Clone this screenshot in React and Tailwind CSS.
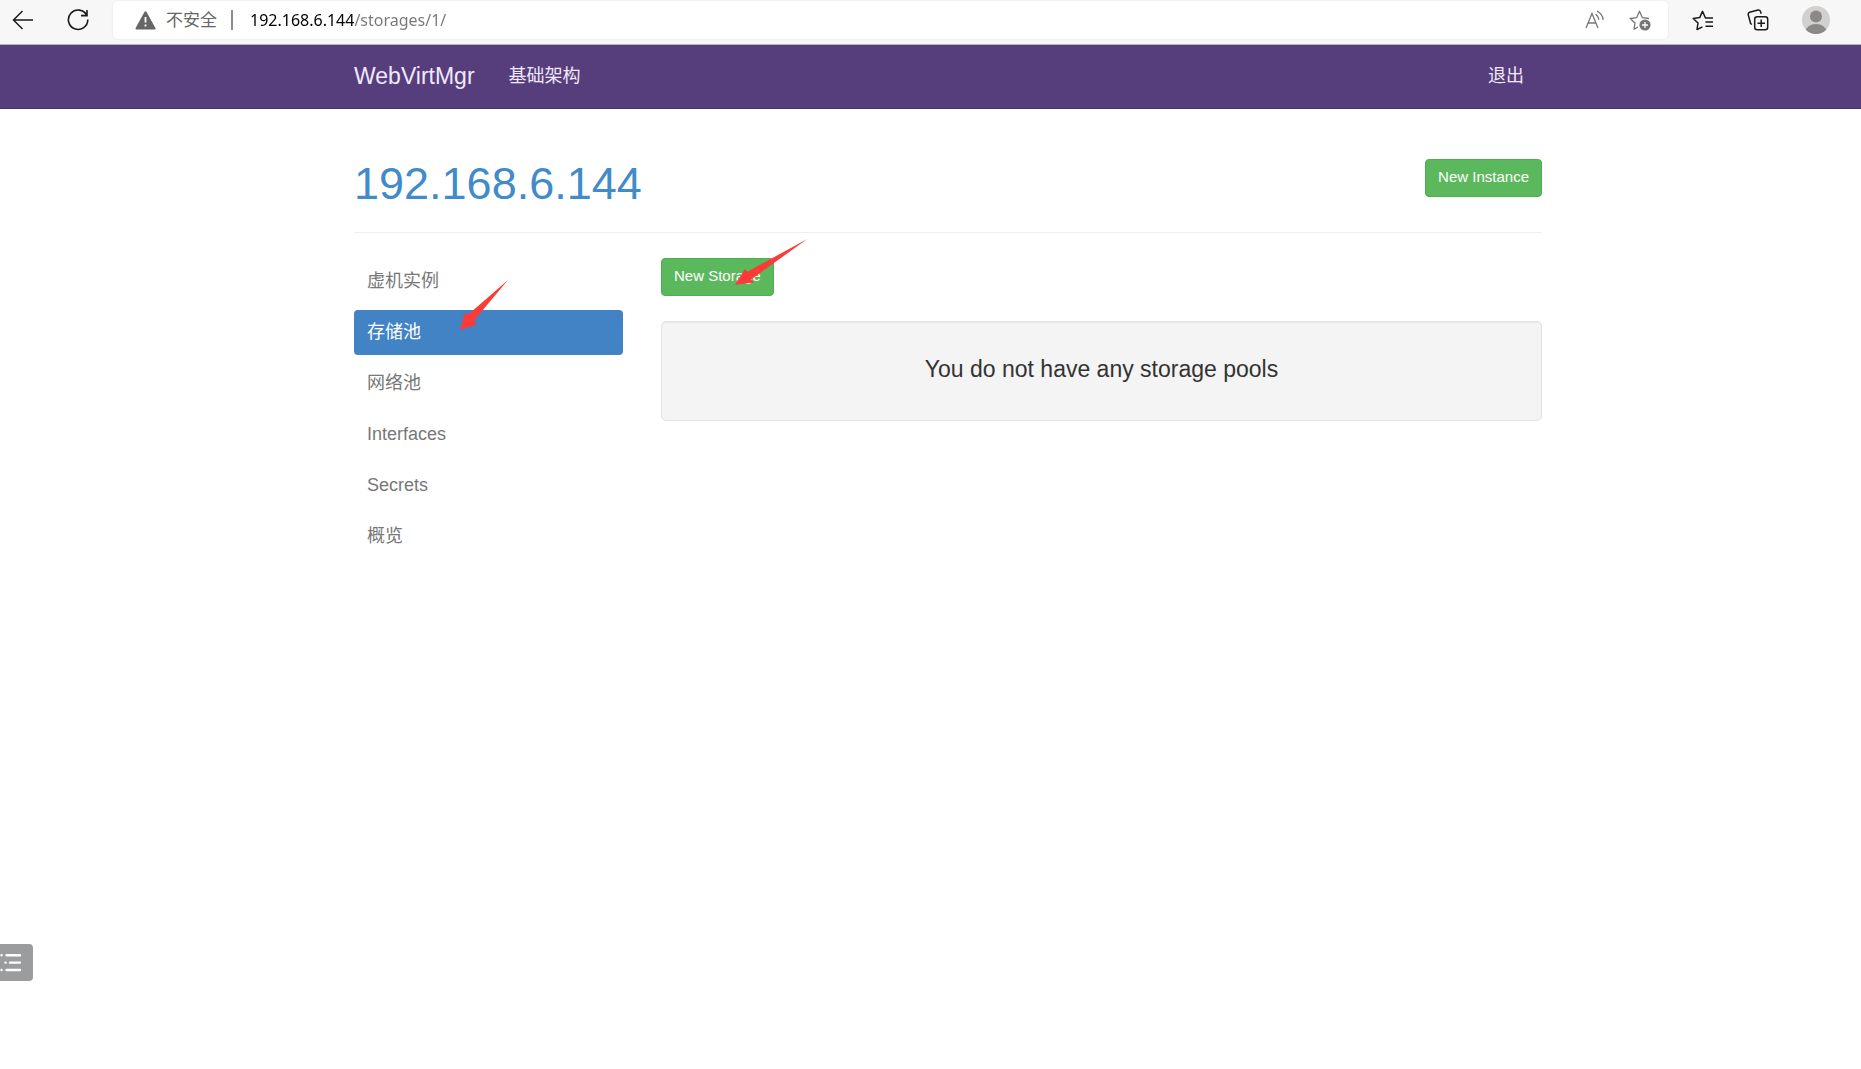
const menu = [
  { label: "虚机实例" },
  { label: "存储池", active: true },
  { label: "网络池" },
  { label: "Interfaces" },
  { label: "Secrets" },
  { label: "概览" },
];

function BrowserBar() {
  return (
    <header className="flex h-[45px] items-start border-b border-[#b4b4b4] bg-[#f7f7f7] font-['Noto_Sans','Noto_Sans_CJK_SC',sans-serif]">
      <div className="flex h-10 w-[113px] shrink-0 items-center pl-3">
        <button type="button" aria-label="Back">
          <svg width="22" height="20" viewBox="0 0 22 20" fill="none" stroke="#1a1a1a" strokeWidth="1.5">
            <path d="M21 10H1.5M10.5 1 1.5 10 10.5 19" />
          </svg>
        </button>
        <button type="button" aria-label="Reload" className="ml-[33px]">
          <svg width="22" height="22" viewBox="0 0 22 22" fill="none" stroke="#1a1a1a" strokeWidth="1.6">
            <path d="M19.8 6.4A9.7 9.7 0 1 0 20.8 10.5M20 1V6.600H14" />
          </svg>
        </button>
      </div>
      <div className="mt-px flex h-[38px] flex-1 items-center rounded-[5px] bg-white pr-[17px] pl-[22px] shadow-[0_0_3px_rgba(0,0,0,0.08)]">
        <svg width="21" height="19" viewBox="0 0 21 19">
          <path d="M10.5 1.4 19.4 17.5H1.6Z" fill="#666" stroke="#666" strokeWidth="2.2" strokeLinejoin="round" />
          <path d="M10.5 6v5.6M10.5 13.4v2" stroke="#fff" strokeWidth="1.8" />
        </svg>
        <span className="ml-[10px] text-[17px] leading-6 text-[#666]">不安全</span>
        <span className="ml-[14px] h-5 w-0.5 bg-[#8c8c8c]" />
        <input
          type="text"
          aria-label="Address"
          defaultValue="192.168.6.144/storages/1/"
          className="ml-[17px] min-w-0 flex-1 bg-[linear-gradient(to_right,#000_104px,#767676_104px)] bg-clip-text text-base leading-6 text-transparent outline-none"
        />
        <button type="button" aria-label="Read aloud">
          <svg width="20" height="20" viewBox="0 0 20 20" fill="none" stroke="#767676" strokeWidth="1.3">
            <path d="M1 18 7 3.5 13 18M3.2 13H10.8M10.5 4.2Q13.4 6 13.8 9.8M12 1.2Q17.5 4 18.2 9.8" />
          </svg>
        </button>
        <button type="button" aria-label="Add to favorites" className="ml-6">
          <svg width="22" height="21" viewBox="0 0 22 21" fill="none" stroke="#767676" strokeWidth="1.3" strokeLinejoin="round">
            <path d="M20 8.500 13.300 7.600 10.500 1.200 7.700 7.600 1.200 8.500 6 13 5 19.300 9 17" />
            <circle cx="16" cy="15" r="5.6" fill="#767676" stroke="none" />
            <path d="M16 12v6M13 15h6" stroke="#fff" />
          </svg>
        </button>
      </div>
      <div className="flex h-10 w-[193px] shrink-0 items-center pl-6">
        <button type="button" aria-label="Favorites">
          <svg width="22" height="21" viewBox="0 0 22 21" fill="none" stroke="#1a1a1a" strokeWidth="1.5" strokeLinejoin="round">
            <path d="M21 8H13.500L10.500 1.400 7.700 7.600 1.200 8.500 6 13 5 19.500 10.500 16.800M13.500 12H21M13.500 16.300H21" />
          </svg>
        </button>
        <button type="button" aria-label="Collections" className="ml-[33px]">
          <svg width="22" height="22" viewBox="0 0 22 22" fill="none" stroke="#1a1a1a" strokeWidth="1.5">
            <rect x="7.7" y="7.7" width="13" height="13" rx="2.5" />
            <path d="M14.2 10.5v7.5M10.5 14.2H18M5 15.5 3.6 14.5 1.2 5.6Q1 3.8 2.6 3.2L11 1Q13 .8 13.5 2.4L14.2 4.8" />
          </svg>
        </button>
        <button type="button" aria-label="Profile" className="ml-[33px]">
          <svg width="28" height="28" viewBox="0 0 28 28">
            <defs>
              <clipPath id="avatar"><circle cx="14" cy="14" r="14" /></clipPath>
            </defs>
            <g clipPath="url(#avatar)">
              <rect width="28" height="28" fill="#d2d0ce" />
              <circle cx="14" cy="10.500" r="6" fill="#8a8886" />
              <ellipse cx="14" cy="26" rx="10.500" ry="8" fill="#8a8886" />
            </g>
          </svg>
        </button>
      </div>
    </header>
  );
}

function Container({ children, className = "" }) {
  return (
    <div className="pl-[35px]">
      <div className={`mx-auto max-w-[1188px] ${className}`}>{children}</div>
    </div>
  );
}

function GreenButton({ children }) {
  return (
    <button type="button" className="rounded-[4px] border border-[#4cae4c] bg-[#5cb85c] px-3 pt-[6px] pb-2 text-[15px] leading-[22px] text-white">
      {children}
    </button>
  );
}

export default function App() {
  return (
    <div className="min-h-screen bg-white font-['Liberation_Sans','Noto_Sans_CJK_SC',sans-serif] text-[#333]">
      <BrowserBar />

      <nav className="border-b border-[#463265] bg-[#563d7c]">
        <Container className="flex h-[63px] items-center pr-[18px] pb-0.5 text-[#f0e9fa]">
          <a href="#" className="text-[23px] leading-7">WebVirtMgr</a>
          <a href="#" className="ml-[34px] text-[18px] leading-6">基础架构</a>
          <a href="#" className="ml-auto text-[18px] leading-6">退出</a>
        </Container>
      </nav>

      <Container className="pt-[50px]">
        <div className="flex items-start justify-between border-b border-[#eee] pb-6">
          <h1 className="text-[45px] leading-[49px] text-[#428bca]">
            <a href="#">192.168.6.144</a>
          </h1>
          <GreenButton>New Instance</GreenButton>
        </div>

        <div className="flex gap-[38px] pt-[25px]">
          <ul className="mt-px flex w-[269px] shrink-0 flex-col gap-[6px]">
            {menu.map((m) => (
              <li key={m.label} className="relative">
                <a
                  href="#"
                  className={
                    m.active
                      ? "block rounded-[4px] bg-[#4183c4] px-[13px] py-[10px] text-[18px] leading-[25px] text-white"
                      : "block rounded-[4px] px-[13px] py-[10px] text-[18px] leading-[25px] text-[#777]"
                  }
                >
                  {m.label}
                </a>
                {m.active && (
                  <svg className="absolute -top-[30px] left-[106px]" width="49" height="51" viewBox="0 0 49 51">
                    <path d="M0 50 4.7 33.3 8.3 34.5 48 0 14 40.5 16.8 44.5Z" fill="#fc3a38" />
                  </svg>
                )}
              </li>
            ))}
          </ul>

          <main className="min-w-0 flex-1">
            <div className="relative w-fit">
              <GreenButton>New Storage</GreenButton>
              <svg className="absolute -top-[19px] left-[74px]" width="73" height="46" viewBox="0 0 73 46">
                <path d="M0 45.7 10 30 12.3 32.7 72.3 0 16 40.5 19 43.5Z" fill="#fc3a38" />
              </svg>
            </div>
            <section className="mt-[25px] rounded-[5px] border border-[#e3e3e3] bg-[#f4f4f4] pt-[33px] pb-[37px] text-center shadow-[inset_0_1px_1px_rgba(0,0,0,0.05)]">
              <p className="text-[23px] leading-7">You do not have any storage pools</p>
            </section>
          </main>
        </div>
      </Container>

      <button type="button" aria-label="Show outline" className="fixed bottom-[88px] left-0 h-[37px] w-[33px] rounded-r-[4px] bg-[#9b9c9d]">
        <svg width="33" height="37" viewBox="0 0 33 37" stroke="#fff" strokeWidth="2.4" strokeLinecap="round">
          <path d="M6.5 11.2H20M10 18.6H20M6.5 26H20M1.5 11.2h.1M5.5 18.6h.1M1.5 26h.1" />
        </svg>
      </button>
    </div>
  );
}
